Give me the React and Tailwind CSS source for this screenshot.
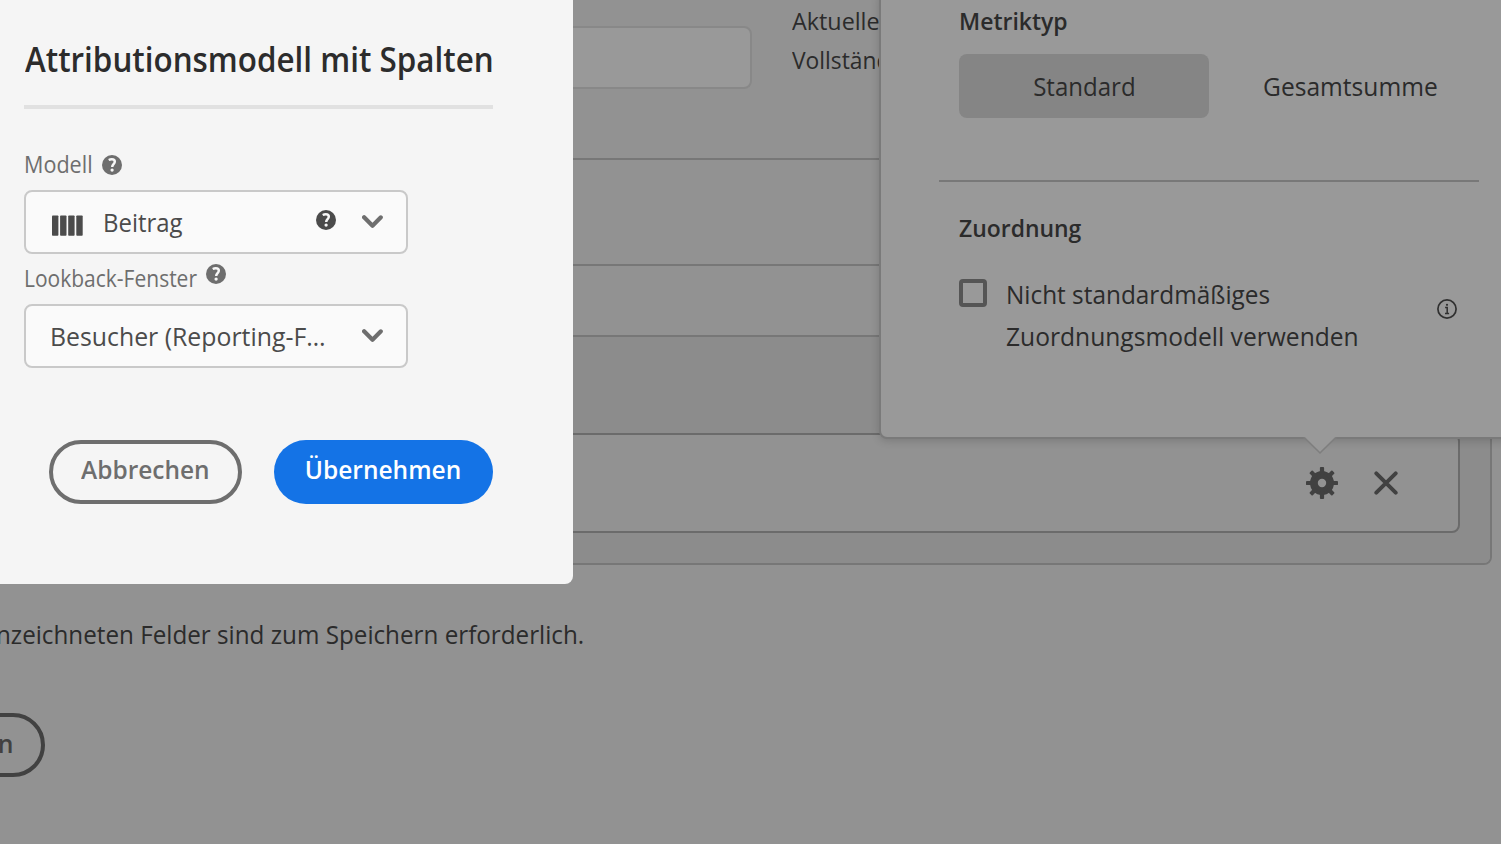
import React from "react";

function Help({ className }) {
  return (
    <svg className={className} width="20" height="20" viewBox="0 0 20 20" fill="none">
      <circle cx="10" cy="10" r="10" fill="currentColor" />
      <path d="M6.7 5C7.7 4.5 8.7 4.3 9.8 4.3c1.9 0 3 .9 3 2.5 0 2.3-2.6 2.5-2.6 5.2" stroke="#f7f7f7" strokeWidth="2.5" />
      <circle cx="10.1" cy="15.1" r="1.65" fill="#f7f7f7" />
    </svg>
  );
}

function Chevron({ className }) {
  return (
    <svg className={className} width="21" height="13" viewBox="0 0 10 6" fill="#6e6e6e">
      <path d="M9.99 1.01A1 1 0 0 0 8.283.303L5 3.586 1.717.303A1 1 0 1 0 .303 1.717l3.99 3.98a1 1 0 0 0 1.414 0l3.99-3.98a.997.997 0 0 0 .293-.707z" />
    </svg>
  );
}

function Bars() {
  return (
    <svg className="mt-[7px] shrink-0" width="31" height="21" viewBox="0 0 31 21" fill="#4b4b4b">
      <rect x="0" y="0.4" width="6.4" height="20.4" rx="0.8" />
      <rect x="8.1" y="0.4" width="6.4" height="20.4" rx="0.8" />
      <rect x="16.2" y="0.4" width="6.4" height="20.4" rx="0.8" />
      <rect x="24.3" y="0.4" width="6.4" height="20.4" rx="0.8" />
    </svg>
  );
}

const TEETH = [0, 45, 90, 135, 180, 225, 270, 315];

function Gear() {
  return (
    <svg width="32" height="32" viewBox="-16 -16 32 32" fill="#414141">
      <circle r="8.1" fill="none" stroke="#414141" strokeWidth="7.8" />
      {TEETH.map((a) => (
        <rect key={a} x="-2.1" y="-16" width="4.2" height="8" rx="0.9" transform={`rotate(${a})`} />
      ))}
    </svg>
  );
}

function Cross() {
  return (
    <svg width="24" height="24" viewBox="0 0 24 24" stroke="#414141" strokeWidth="3.9" strokeLinecap="round">
      <path d="M2.3 2.3 21.7 21.7M21.7 2.3 2.3 21.7" />
    </svg>
  );
}

function Info() {
  return (
    <svg width="20" height="20" viewBox="0 0 20 20" fill="none" stroke="#303030">
      <circle cx="10" cy="10" r="9.1" strokeWidth="1.7" />
      <path d="M8.1 8.5h2.1v5.8M8 14.4h4.1" strokeWidth="1.5" />
      <circle cx="10" cy="5.8" r="1.1" fill="#303030" stroke="none" />
    </svg>
  );
}

function Page() {
  return (
    <div className="flex h-full flex-col text-[#2b2b2b]">
      <div className="flex h-[158px] shrink-0 items-start">
        <div className="mt-[26px] -ml-[10px] h-[63px] w-[762px] shrink-0 rounded-[8px] border-2 border-[#888] bg-[#999]" />
        <div className="ml-10 flex flex-col pt-[1px] text-[24px] leading-[39px]">
          <span className="origin-left scale-x-[0.972]">Aktuelle</span>
          <span className="origin-left scale-x-[0.95]">Vollständig</span>
        </div>
      </div>
      <div className="-ml-[10px] flex h-[407px] w-[1502px] shrink-0 flex-col overflow-hidden rounded-[8px] border-2 border-[#777]">
        <div className="h-[106px] shrink-0 border-b-2 border-[#777]" />
        <div className="h-[71px] shrink-0 border-b-2 border-[#777]" />
        <div className="flex-1 bg-[#8c8c8c] pt-[96px]">
          <div className="flex h-[100px] w-[1468px] items-center justify-end gap-9 rounded-[8px] border-2 border-[#6b6b6b] bg-[#929292] pr-[60px]">
            <Gear />
            <Cross />
          </div>
        </div>
      </div>
      <div className="mt-[49px] flex h-10 w-[584px] justify-end whitespace-nowrap text-[26px] leading-10">
        <span className="origin-right scale-x-[0.932]">nzeichneten Felder sind zum Speichern erforderlich.</span>
      </div>
      <div className="mt-[59px] -ml-[60px] flex h-16 w-[105px] shrink-0 items-center justify-end rounded-full border-4 border-[#414141] pr-[27px] pb-[4px] text-[26px] leading-none font-semibold text-[#414141]">
        <span className="origin-right scale-x-[0.95]">n</span>
      </div>
    </div>
  );
}

function Popover() {
  return (
    <div className="absolute -top-[10px] left-[879px] h-[449px] w-[640px] rounded-[8px] border-2 border-[#7a7a7a] bg-[#999] pt-[14px] pl-[58px] text-[#2b2b2b] shadow-[0_2px_8px_rgba(0,0,0,0.16)]">
      <div className="flex flex-col pl-5">
        <div className="flex h-[28px] items-center pt-[2px] text-[24px] leading-none font-semibold">
          <span className="origin-left scale-x-[0.957]">Metriktyp</span>
        </div>
        <div className="mt-5 flex h-16 text-[26px]">
          <div className="flex w-[250px] items-center justify-center rounded-[8px] bg-[#858585]">
            <span className="scale-x-[0.925]">Standard</span>
          </div>
          <div className="flex w-[282px] items-center justify-center">
            <span className="scale-x-[0.945]">Gesamtsumme</span>
          </div>
        </div>
      </div>
      <div className="mt-[62px] h-[2px] w-[540px] bg-[#787878]" />
      <div className="flex flex-col pl-5">
        <div className="mt-[32px] flex h-[28px] items-center text-[24px] leading-none font-semibold">
          <span className="origin-left scale-x-[0.955]">Zuordnung</span>
        </div>
        <div className="mt-[31px] flex items-start">
          <div className="mt-[6px] size-7 rounded-[4px] border-4 border-[#555]" />
          <div className="ml-[19px] flex w-[431px] flex-col text-[26px] leading-[42px] whitespace-nowrap">
            <span className="origin-left scale-x-[0.937]">Nicht standardmäßiges</span>
            <span className="origin-left scale-x-[0.946]">Zuordnungsmodell verwenden</span>
          </div>
          <div className="mt-[26px]">
            <Info />
          </div>
        </div>
      </div>
      <svg className="absolute top-[445px] left-[422px]" width="34" height="18" viewBox="0 0 34 18">
        <path d="M1 0h32L17 15.6z" fill="#999" />
        <path d="M0 1h1.8L17 16 32.2 1H34" fill="none" stroke="#7e7e7e" strokeWidth="1.6" />
      </svg>
    </div>
  );
}

function Dialog() {
  return (
    <div className="absolute top-0 left-0 flex h-[584px] w-[573px] flex-col rounded-br-[8px] bg-[#f5f5f5] pl-6 whitespace-nowrap">
      <div className="mt-[35px] h-12 text-[34px] leading-[48px] font-semibold text-[#2c2c2c]">
        <span className="ml-px inline-block origin-left scale-x-[0.923]">Attributionsmodell mit Spalten</span>
      </div>
      <div className="mt-[22px] h-1 w-[469px] bg-[#e1e1e1]" />
      <div className="mt-[40px] flex h-[30px] items-center text-[23px] leading-[30px] text-[#6e6e6e]">
        <span className="w-[78px] origin-left scale-x-[0.938]">Modell</span>
        <Help className="mt-[2px]" />
      </div>
      <div className="mt-[11px] flex h-16 w-[384px] items-center rounded-[8px] border-2 border-[#c9c9c9] bg-[#fafafa] pl-[26px] text-[26px] text-[#4b4b4b]">
        <Bars />
        <span className="ml-[20px] w-[213px] origin-left scale-x-[0.92]">Beitrag</span>
        <Help className="mb-1 shrink-0" />
        <Chevron className="mb-px ml-[26px] shrink-0" />
      </div>
      <div className="mt-[9px] flex h-[30px] items-center text-[23px] leading-[30px] text-[#6e6e6e]">
        <span className="w-[182px] origin-left scale-x-[0.913]">Lookback-Fenster</span>
        <Help className="mb-[8px]" />
      </div>
      <div className="mt-[11px] flex h-16 w-[384px] items-center rounded-[8px] border-2 border-[#c9c9c9] bg-[#fafafa] pl-6 text-[26px] text-[#4b4b4b]">
        <span className="w-[312px] origin-left scale-x-[0.955]">Besucher (Reporting-F…</span>
        <Chevron className="mb-px shrink-0" />
      </div>
      <div className="mt-[72px] ml-[25px] flex h-16 gap-8 text-[26px] leading-none font-semibold">
        <div className="flex w-[193px] items-center justify-center rounded-full border-4 border-[#6e6e6e] pb-[6px] text-[#6e6e6e]">
          <span className="scale-x-[0.94]">Abbrechen</span>
        </div>
        <div className="flex w-[219px] items-center justify-center rounded-full bg-[#1473e6] pb-[6px] text-white">
          <span className="scale-x-[0.942]">Übernehmen</span>
        </div>
      </div>
    </div>
  );
}

export default function App() {
  return (
    <div className="relative h-[844px] w-[1501px] overflow-hidden bg-[#929292] font-['Open_Sans',sans-serif]">
      <Page />
      <Popover />
      <Dialog />
    </div>
  );
}
